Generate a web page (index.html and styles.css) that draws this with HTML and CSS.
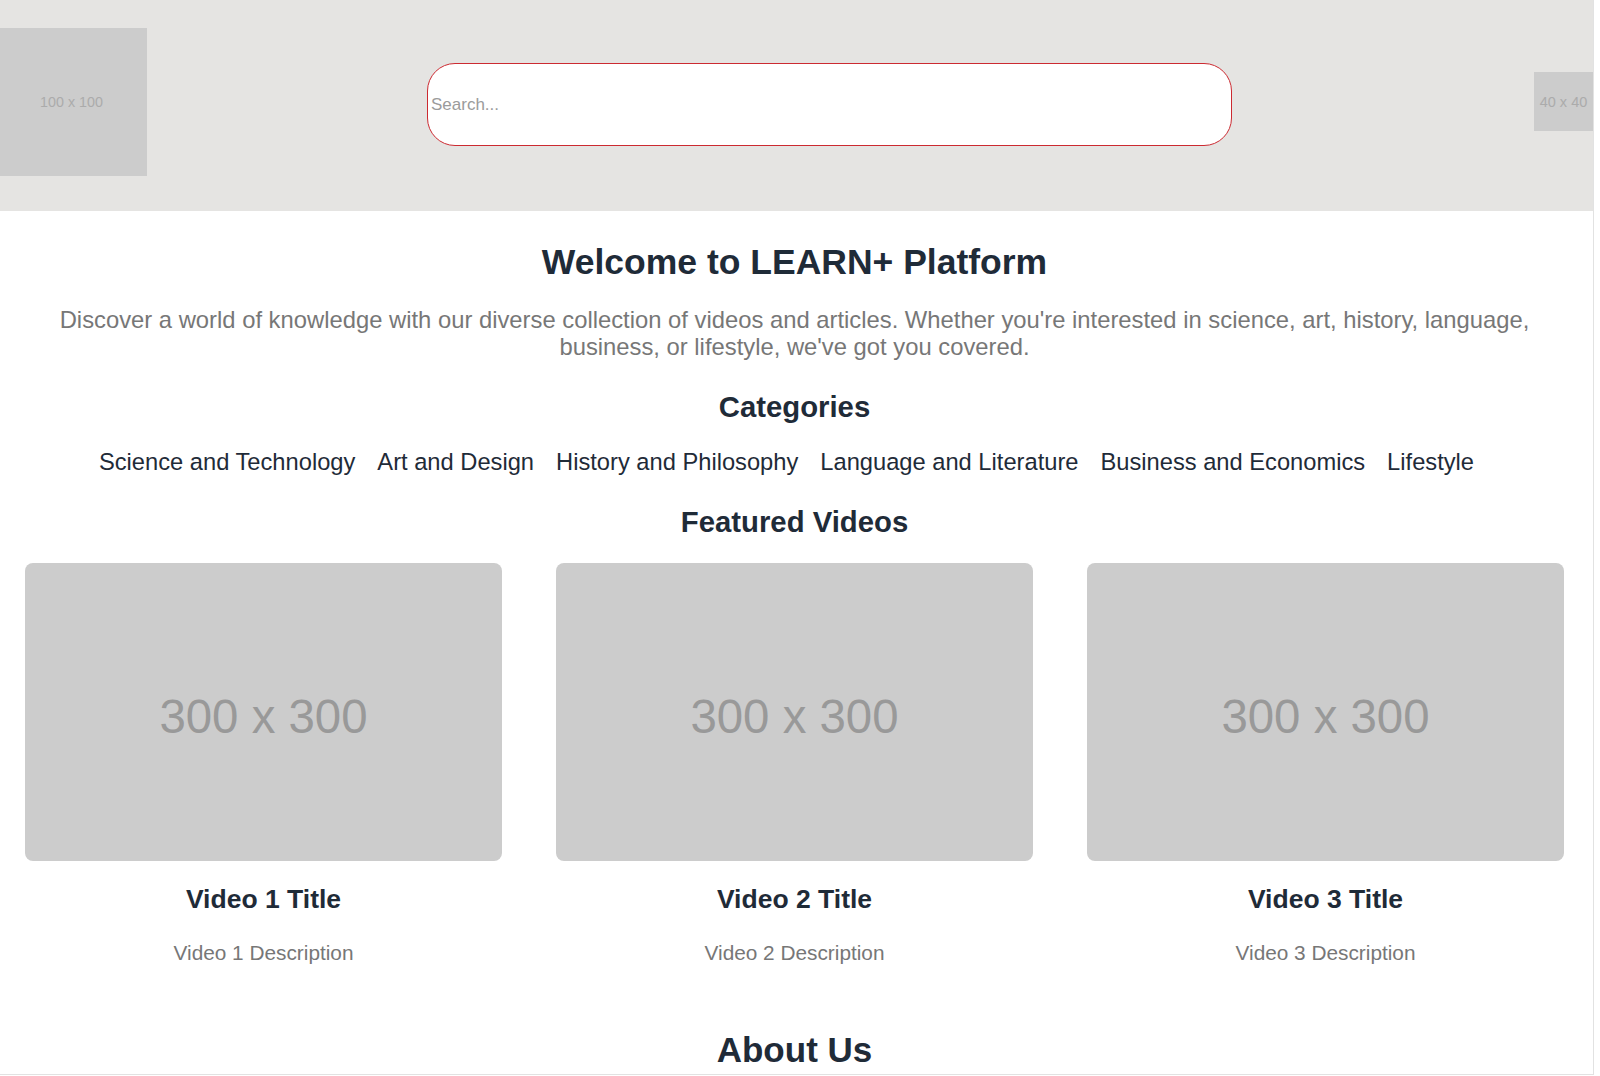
FILE: index.html
```html
<!DOCTYPE html>
<html lang="en">
<head>
<meta charset="utf-8">
<title>LEARN+ Platform</title>
<link rel="stylesheet" href="styles.css">
</head>
<body>
<div class="page">
  <header class="site-header">
    <div class="logo">100 x 100</div>
    <input class="search" type="text" placeholder="Search...">
    <div class="avatar">40 x 40</div>
  </header>
  <main class="main">
    <h1 class="welcome">Welcome to LEARN+ Platform</h1>
    <p class="intro">Discover a world of knowledge with our diverse collection of videos and articles. Whether you're interested in science, art, history, language, business, or lifestyle, we've got you covered.</p>
    <h2 class="section-title categories-title">Categories</h2>
    <nav class="categories">
      <a href="#">Science and Technology</a>
      <a href="#">Art and Design</a>
      <a href="#">History and Philosophy</a>
      <a href="#">Language and Literature</a>
      <a href="#">Business and Economics</a>
      <a href="#">Lifestyle</a>
    </nav>
    <h2 class="section-title featured-title">Featured Videos</h2>
    <div class="videos">
      <div class="video">
        <div class="thumb">300 x 300</div>
        <h3 class="video-title">Video 1 Title</h3>
        <p class="video-desc">Video 1 Description</p>
      </div>
      <div class="video">
        <div class="thumb">300 x 300</div>
        <h3 class="video-title">Video 2 Title</h3>
        <p class="video-desc">Video 2 Description</p>
      </div>
      <div class="video">
        <div class="thumb">300 x 300</div>
        <h3 class="video-title">Video 3 Title</h3>
        <p class="video-desc">Video 3 Description</p>
      </div>
    </div>
    <h2 class="about">About Us</h2>
  </main>
</div>
</body>
</html>
```

FILE: styles.css
```css
* { box-sizing: border-box; }

html, body {
  margin: 0;
  padding: 0;
  background: #ffffff;
}

body {
  font-family: "Liberation Sans", Arial, Helvetica, sans-serif;
  color: #1f2b38;
}

.page {
  width: 1594px;
  height: 1075px;
  overflow: hidden;
  border-right: 1px solid #e2e2e2;
  border-bottom: 1px solid #e2e2e2;
}

.site-header {
  height: 211px;
  background: #e5e4e2;
  display: flex;
  align-items: center;
  padding-bottom: 8px;
}

.logo {
  width: 147px;
  height: 148px;
  background: #cccccc;
  color: #ababab;
  font-size: 14.3px;
  display: flex;
  align-items: center;
  justify-content: center;
  padding-right: 4px;
}

.search {
  margin-left: 280px;
  margin-top: 6px;
  width: 805px;
  height: 83px;
  border: 1.5px solid #cc2a31;
  border-radius: 28px;
  background: #ffffff;
  padding: 0 0 0 3px;
  font-family: "Liberation Sans", Arial, sans-serif;
  font-size: 17px;
  color: #333;
  outline: none;
}

.search::placeholder {
  color: #9b9b9b;
}

.avatar {
  margin-left: auto;
  width: 59px;
  height: 59px;
  background: #cccccc;
  color: #ababab;
  font-size: 14.5px;
  display: flex;
  align-items: center;
  justify-content: center;
  white-space: nowrap;
}

.main {
  padding: 0 29px 0 25px;
  text-align: center;
}

.welcome {
  margin: 31px 0 0;
  font-size: 35.5px;
  line-height: 40px;
  font-weight: 700;
  color: #1f2b38;
}

.intro {
  margin: 24px 0 0;
  font-size: 23.8px;
  line-height: 27px;
  color: #777777;
}

.section-title {
  font-size: 29.3px;
  line-height: 34px;
  font-weight: 700;
  color: #1f2b38;
}

.categories-title {
  margin: 30px 0 0;
}

.categories {
  margin-top: 24px;
  padding-right: 16px;
  display: flex;
  justify-content: center;
  gap: 22px;
  font-size: 23.7px;
  line-height: 28px;
}

.categories a {
  color: #1f2b38;
  text-decoration: none;
}

.featured-title {
  margin: 29px 0 0;
}

.videos {
  margin-top: 24px;
  display: grid;
  grid-template-columns: repeat(3, 1fr);
  gap: 54px;
}

.thumb {
  height: 298px;
  background: #cccccc;
  border-radius: 8px;
  color: #999999;
  font-size: 47.4px;
  display: flex;
  align-items: center;
  justify-content: center;
  padding-top: 8px;
}

.video-title {
  margin: 23px 0 0;
  font-size: 26.5px;
  line-height: 31px;
  font-weight: 700;
  color: #1f2b38;
}

.video-desc {
  margin: 25px 0 0;
  font-size: 20.8px;
  line-height: 25px;
  color: #777777;
}

.about {
  margin: 65px 0 0;
  font-size: 35px;
  line-height: 40px;
  font-weight: 700;
  color: #1f2b38;
}
```
